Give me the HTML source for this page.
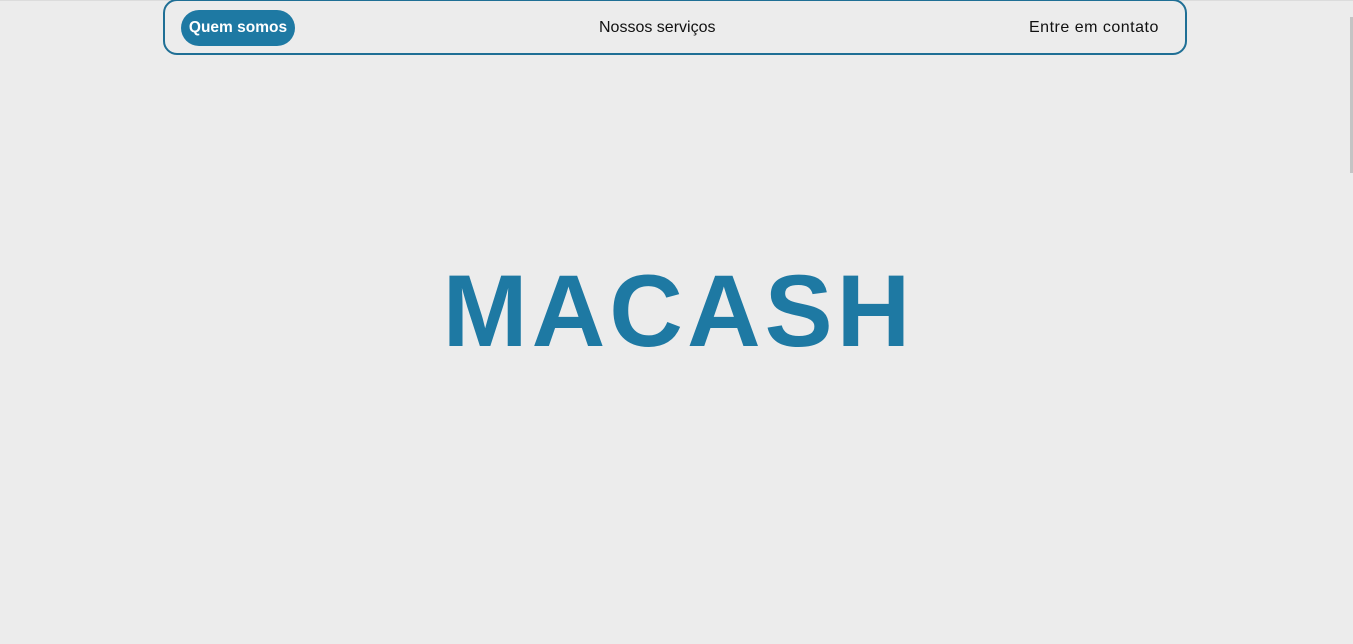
<!DOCTYPE html>
<html><head><meta charset="utf-8"><style>
html,body{margin:0;padding:0;}
body{width:1353px;height:644px;background:#ececec;font-family:"Liberation Sans",sans-serif;position:relative;overflow:hidden;border-top:1px solid #dcdcdc;box-sizing:border-box}
.nav{position:absolute;left:163px;top:-2px;width:1020px;height:52px;border:2px solid #1f6f95;border-radius:14px;}
.btn{position:absolute;left:16px;top:9px;width:114px;height:36px;border-radius:18px;background:#1e79a3;color:#fff;font-weight:bold;font-size:15.5px;line-height:36px;text-align:center}
.l{position:absolute;top:9px;line-height:36px;font-size:16px;color:#111}
h1{position:absolute;left:4px;width:1349px;top:245px;margin:0;text-align:center;font-size:102px;font-weight:bold;color:#1e79a3;line-height:130px;letter-spacing:4px}
.sb{position:absolute;right:0;top:16px;width:3px;height:156px;background:#c4c4c4}
</style></head><body>
<div class="nav"><div class="btn">Quem somos</div>
<div class="l" style="left:434px">Nossos serviços</div>
<div class="l" style="left:864px;letter-spacing:0.5px">Entre em contato</div></div>
<h1>MACASH</h1>
<div class="sb"></div>
</body></html>
